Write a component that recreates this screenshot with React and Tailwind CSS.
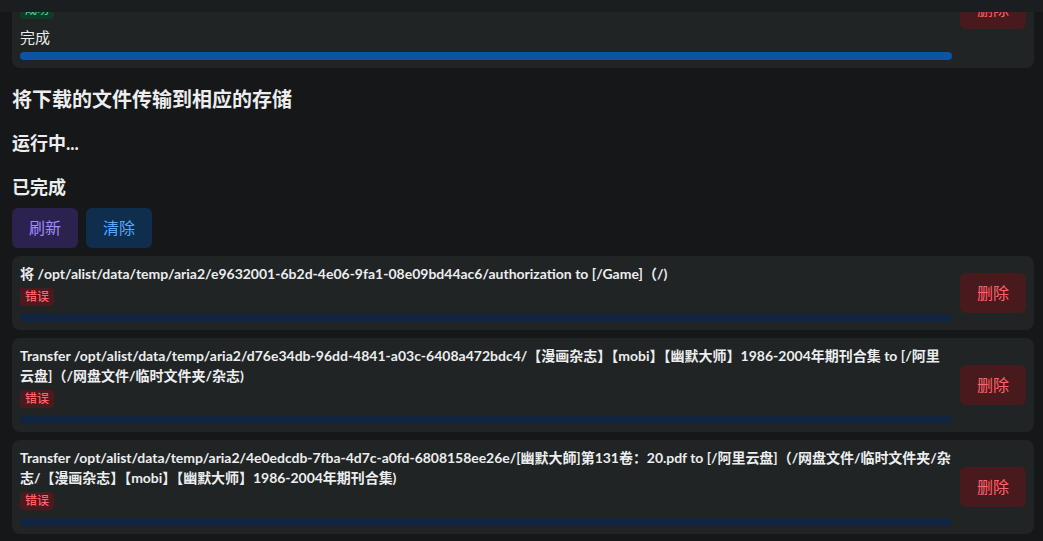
import React from 'react';

const tasks = [
  {
    name: '将 /opt/alist/data/temp/aria2/e9632001-6b2d-4e06-9fa1-08e09bd44ac6/authorization to [/Game]（/)',
  },
  {
    name: 'Transfer /opt/alist/data/temp/aria2/d76e34db-96dd-4841-a03c-6408a472bdc4/【漫画杂志】【mobi】【幽默大师】1986-2004年期刊合集 to [/阿里云盘]（/网盘文件/临时文件夹/杂志)',
  },
  {
    name: 'Transfer /opt/alist/data/temp/aria2/4e0edcdb-7fba-4d7c-a0fd-6808158ee26e/[幽默大師]第131卷：20.pdf to [/阿里云盘]（/网盘文件/临时文件夹/杂志/【漫画杂志】【mobi】【幽默大师】1986-2004年期刊合集)',
    tight: true,
  },
];

const DeleteButton = () => (
  <button className="shrink-0 h-10 w-[66px] rounded-md bg-[#481a1d] text-base text-[#ff6369]">
    删除
  </button>
);

const TaskCard = ({ name, done, tight }) => (
  <div className="flex items-center gap-2 rounded-lg bg-[#202425] p-2">
    <div className="flex min-w-0 flex-1 flex-col">
      <div
        className={`text-sm font-bold leading-5 text-[#ecedee] ${tight ? 'tracking-[-0.04px]' : ''} ${done ? 'line-clamp-2' : ''}`}
      >
        {name}
      </div>
      {done ? (
        <>
          <span className="mt-1 self-start rounded-sm bg-[#113b29] px-[5px] text-xs font-medium leading-[18px] text-[#4cc38a]">
            成功
          </span>
          <div className="mt-2 text-[15px] leading-5 text-[#ecedee]">完成</div>
          <div className="mt-[5px] h-2 w-full rounded-full bg-[#0b55a3]" />
        </>
      ) : (
        <>
          <span className="mt-1 self-start rounded-sm bg-[#4a1a1e] px-[5px] text-xs font-medium leading-[18px] text-[#ff6369]">
            错误
          </span>
          <div className="mt-2 h-2 w-full rounded-full bg-[#112440]" />
        </>
      )}
    </div>
    <DeleteButton />
  </div>
);

export default function App() {
  return (
    <div
      className="h-screen overflow-hidden bg-[#151718] text-[#ecedee]"
      style={{ fontFamily: 'Lato, "Noto Sans CJK SC", sans-serif' }}
    >
      <div className="relative z-10 h-3 bg-[#1b1e20]" />
      <div className="-mt-[63px] flex flex-col pl-3 pr-[9px]">
        <TaskCard
          done
          name="Transfer /opt/alist/data/temp/aria2/0c1a55e2-8b4e-4f0a-9d1e-3e5c2f7a9b10/【漫画杂志】【mobi】【幽默大师】1986-2004年期刊合集/幽默大师第130卷.pdf to [/阿里云盘]（/网盘文件/临时文件夹/杂志/【漫画杂志】【mobi】【幽默大师】1986-2004年期刊合集)"
        />

        <h2 className="mt-[17px] text-xl font-bold leading-7">将下载的文件传输到相应的存储</h2>
        <h3 className="mt-4 text-lg font-bold leading-7">运行中...</h3>
        <h3 className="mt-4 text-lg font-bold leading-7">已完成</h3>

        <div className="mt-[7px] flex gap-2">
          <button className="h-10 w-[66px] rounded-md bg-[#2c2250] text-base text-[#9e8cfc]">刷新</button>
          <button className="h-10 w-[66px] rounded-md bg-[#0f2d4d] text-base text-[#52a9ff]">清除</button>
        </div>

        <div className="mt-2 flex flex-col gap-2">
          {tasks.map((t) => (
            <TaskCard key={t.name} name={t.name} tight={t.tight} />
          ))}
        </div>
      </div>
    </div>
  );
}
